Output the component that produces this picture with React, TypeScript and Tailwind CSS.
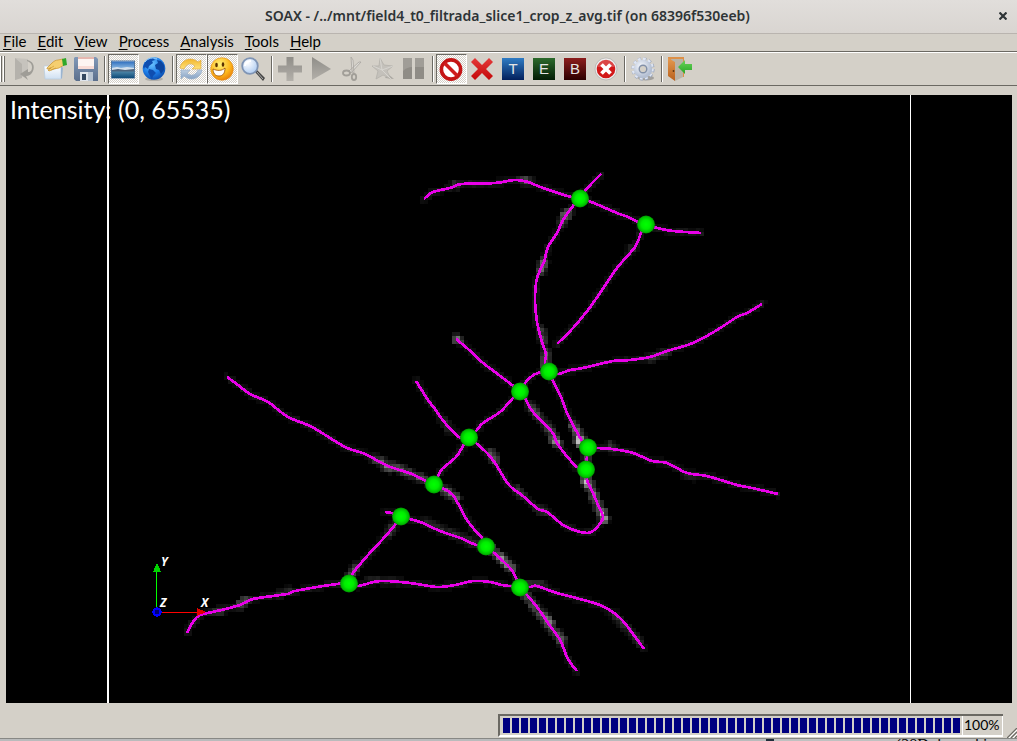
import React from "react";

type Point = [number, number];

/* ---------- scene data ---------- */

const filaments: string[] = [
  "424,199 433,192 450,188 462,184 495,183 515,180 528,182 543,188 571,197 580,198",
  "580,198 585,191 592,183 601,174",
  "580,198 589,201 617,213 628,217 638,222 646,224 657,228 673,231 701,233",
  "646,224 641,233 635,247 617,268 600,293 588,310 573,328 557,344",
  "580,198 573,206 563,220 557,233 548,247 544,262 537,278 535,300 537,322 542,342 546,354 545,363 549,371",
  "549,371 558,374 570,370 583,368 613,361 630,360 650,357 667,351 693,343 717,330 737,317 747,313 762,304",
  "456,339 468,349 483,363 495,372 512,385 520,391",
  "520,391 525,383 532,376 538,373 549,371",
  "416,381 428,400 435,409 445,423 459,437 469,437",
  "520,391 513,398 500,412 483,423 476,431 469,437",
  "469,437 463,446 456,457 442,469 438,476 434,484",
  "520,391 526,400 533,412 552,432 557,443 565,454 577,467 586,469",
  "549,371 553,381 561,397 567,413 573,425 581,439 588,447 587,457 586,469 587,480 593,493 598,505 603,517 599,525 593,531 587,533 577,531 563,525 547,512 538,509 523,496 509,485 495,463 487,453 476,443 469,437",
  "588,447 597,448 612,449 633,453 652,461 667,463 687,473 707,476 737,485 752,488 778,494",
  "227,377 238,385 250,394 268,402 288,417 312,427 345,447 365,454 388,466 412,474 426,481 434,484",
  "434,484 442,488 453,495 465,517 473,528 482,538 486,546 493,552 510,568 516,578 520,587 527,595 537,607 548,623 560,640 567,657 572,665 577,671",
  "385,512 392,513 401,516 410,519 423,523 440,531 463,539 476,545 486,546",
  "401,516 395,525 382,540 368,555 353,573 349,583",
  "187,633 193,622 200,615 217,611 240,605 253,599 287,594 295,591 330,585 349,583 358,586 380,581 410,583 437,587 455,585 473,581 490,582 502,585 520,587 530,587 537,586 557,593 600,605 620,618 633,634 644,649",
];

const junctions: Point[] = [
  [580, 198], [646, 224], [549, 371], [520, 391], [469, 437], [588, 447],
  [586, 469], [434, 484], [401, 516], [486, 546], [349, 583], [520, 587],
];

/* Bright stretches of the underlying image: path and peak grey level. */
const bright: [string, number][] = [
  ["455,184 458,185", 70], ["522,180 530,181", 85], ["564,216 568,212", 105],
  ["562,222 568,214", 90], ["541,270 544,262", 105], ["541,330 543,340", 75],
  ["546,353 545,365", 95], ["456,339 459,340", 110], ["650,358 668,352", 55],
  ["631,249 634,248", 50], ["531,407 553,434", 80], ["553,438 557,443", 155],
  ["573,425 582,440", 115], ["579,440 580,442", 235], ["587,455 587,462", 75],
  ["586,478 603,517", 120], ["586,481 589,485", 185], ["602,512 604,519", 175],
  ["375,459 425,480", 85], ["385,465 390,468", 125], ["445,490 456,498", 110],
  ["490,452 495,460", 105], ["516,489 523,496", 60], ["536,508 545,512", 60],
  ["491,549 512,568", 110], ["500,557 507,565", 150], ["525,594 562,642", 95],
  ["543,615 550,624", 145], ["557,634 561,639", 135], ["388,533 393,527", 75],
  ["351,574 356,567", 75], ["212,612 222,611", 55], ["240,605 246,600", 100],
  ["280,594 290,591", 50], ["520,585 542,584", 60], ["615,615 640,643", 50],
  ["425,522 478,545", 50], ["610,446 614,449", 70], ["685,474 697,477", 40],
  ["370,580 400,582", 40], ["443,420 450,430", 45],
];

const CELL = 4;

function parse(path: string): Point[] {
  return path.split(" ").map((p) => p.split(",").map(Number) as Point);
}

/* Catmull-Rom spline through the traced points. */
function smooth(path: string): string {
  const p = parse(path);
  let d = `M${p[0][0]} ${p[0][1]}`;
  for (let i = 0; i < p.length - 1; i++) {
    const a = p[Math.max(0, i - 1)];
    const b = p[i];
    const c = p[i + 1];
    const e = p[Math.min(p.length - 1, i + 2)];
    d += `C${b[0] + (c[0] - a[0]) / 6} ${b[1] + (c[1] - a[1]) / 6} ${c[0] - (e[0] - b[0]) / 6} ${c[1] - (e[1] - b[1]) / 6} ${c[0]} ${c[1]}`;
  }
  return d;
}

function noise(a: number, b: number): number {
  const n = Math.sin(a * 12.9898 + b * 78.233) * 43758.5453;
  return n - Math.floor(n);
}

function buildHaze(): { x: number; y: number; v: number }[] {
  const cells = new Map<string, { x: number; y: number; v: number }>();
  const add = (path: string, level: number, radius: number) => {
    const pts = parse(path);
    for (let i = 1; i < pts.length; i++) {
      const [x0, y0] = pts[i - 1];
      const [x1, y1] = pts[i];
      const steps = Math.max(1, Math.ceil(Math.hypot(x1 - x0, y1 - y0) / 2));
      for (let s = 0; s <= steps; s++) {
        const px = x0 + ((x1 - x0) * s) / steps;
        const py = y0 + ((y1 - y0) * s) / steps;
        for (let dx = -1; dx <= 1; dx++) {
          for (let dy = -1; dy <= 1; dy++) {
            const cx = Math.floor(px / CELL) + dx;
            const cy = Math.floor(py / CELL) + dy;
            const d = Math.hypot((cx + 0.5) * CELL - px, (cy + 0.5) * CELL - py);
            const fall = Math.max(0, 1 - d / radius);
            const v = Math.round(level * fall * (0.6 + 0.7 * noise(cx, cy)));
            const key = cx + ":" + cy;
            const old = cells.get(key);
            if (v > 7 && (!old || old.v < v)) {
              cells.set(key, { x: cx * CELL, y: cy * CELL, v: Math.min(v, 235) });
            }
          }
        }
      }
    }
  };
  filaments.forEach((f) => add(f, 28, 6));
  bright.forEach(([p, level]) => add(p, level, 7));
  return [...cells.values()];
}

const haze = buildHaze();

function Scene() {
  return (
    <svg viewBox="6 95 1006 608" className="block w-full" role="img" aria-label="Filament network">
      <defs>
        <radialGradient id="ball">
          <stop offset="0" stopColor="#00ff00" />
          <stop offset="0.5" stopColor="#00ee00" />
          <stop offset="0.85" stopColor="#00bc00" />
          <stop offset="1" stopColor="#008a00" />
        </radialGradient>
      </defs>
      <rect x="6" y="95" width="1006" height="608" fill="#000" />
      <g shapeRendering="crispEdges">
        {haze.map((c) => (
          <rect key={c.x + "-" + c.y} x={c.x} y={c.y} width={CELL} height={CELL} fill={`rgb(${c.v},${c.v},${c.v})`} />
        ))}
        <rect x="107" y="95" width="2" height="608" fill="#fff" />
        <rect x="910" y="95" width="1" height="608" fill="#fff" />
        {filaments.map((f) => (
          <path key={f} d={smooth(f)} fill="none" stroke="#e800e8" strokeWidth="2.7" strokeLinejoin="round" />
        ))}
      </g>
      {junctions.map(([x, y]) => (
        <circle key={x + "," + y} cx={x} cy={y + 0.5} r="9" fill="url(#ball)" />
      ))}
      <g shapeRendering="crispEdges">
        <rect x="156" y="570" width="1" height="38" fill="#00ff00" />
        <path d="M157 562.5l4 9.5h-8z" fill="#00d400" />
        <rect x="161" y="612" width="38" height="1" fill="#ff0000" />
        <path d="M206 612l-9-4v8z" fill="#e00000" />
        <circle cx="157" cy="612" r="3.5" fill="#00006e" stroke="#0000ff" strokeWidth="2.5" />
      </g>
      <g fill="#fff" fontFamily="'Noto Sans', sans-serif" fontSize="12" fontWeight="700" fontStyle="italic">
        <text x="161" y="566">Y</text>
        <text x="160" y="607">Z</text>
        <text x="201" y="607">X</text>
      </g>
    </svg>
  );
}

/* ---------- toolbar icons ---------- */

function Icon({ children }: { children: React.ReactNode }) {
  return (
    <svg viewBox="0 0 24 24" className="size-6" aria-hidden="true">
      {children}
    </svg>
  );
}

function IconDefs() {
  const g = (id: string, a: string, b: string) => (
    <linearGradient id={id} x1="0" y1="0" x2="0" y2="1">
      <stop offset="0" stopColor={a} />
      <stop offset="1" stopColor={b} />
    </linearGradient>
  );
  return (
    <svg className="absolute size-0" aria-hidden="true">
      <defs>
        {g("gBlue", "#2f7cc4", "#03205c")}
        {g("gGreen", "#2c6a2c", "#031c05")}
        {g("gRed", "#8c1d1d", "#2c0000")}
        {g("gSky", "#2f6fbe", "#a9d0ee")}
        {g("gSea", "#4d86a8", "#0d4a78")}
        {g("gYellow", "#f2b62c", "#ffe27a")}
        {g("gSteel", "#bccde0", "#86a3c4")}
        {g("gCross", "#e43a3a", "#c40808")}
        {g("gGrey", "#8f8d88", "#b3b0aa")}
        {g("gArrow", "#6bd35a", "#27a727")}
        {g("gDoor", "#e59a50", "#b8601c")}
        {g("gFloppy", "#8199b8", "#5b6f8c")}
        {g("gPaper", "#ffffff", "#cfe0f2")}
        <radialGradient id="gGlobe" cx="0.4" cy="0.3" r="0.75">
          <stop offset="0" stopColor="#6cc4ff" />
          <stop offset="0.55" stopColor="#1f80ea" />
          <stop offset="1" stopColor="#0a48a8" />
        </radialGradient>
        <radialGradient id="gSmile" cx="0.4" cy="0.3" r="0.75">
          <stop offset="0" stopColor="#fff27a" />
          <stop offset="0.6" stopColor="#fdb91e" />
          <stop offset="1" stopColor="#e87a08" />
        </radialGradient>
        <radialGradient id="gLens" cx="0.35" cy="0.3" r="0.8">
          <stop offset="0" stopColor="#ffffff" />
          <stop offset="1" stopColor="#a9c8f0" />
        </radialGradient>
        <radialGradient id="gGear" cx="0.35" cy="0.3" r="0.8">
          <stop offset="0" stopColor="#f6f9ff" />
          <stop offset="1" stopColor="#b4bfd2" />
        </radialGradient>
      </defs>
    </svg>
  );
}

const icons: Record<string, React.ReactNode> = {
  Revert: (
    <Icon>
      <path d="M3 1l13 1v17l-6 1-7 3z" fill="#c6c3bd" />
      <path d="M3 1l7 6v14l-7 2z" fill="#b5b2ac" />
      <path d="M15 3c6 1 8 6 6 11-1 3-4 5-7 5l2 4-8-6 8-5v3c3 0 4-2 4-5s-2-5-5-6z" fill="#9f9d97" />
    </Icon>
  ),
  Open: (
    <Icon>
      <path d="M1 9h17v13H2z" fill="url(#gPaper)" stroke="#b8cce0" strokeWidth="0.7" />
      <path d="M18 9l2 2-1 10-1 1z" fill="#9ab4d0" />
      <path d="M4 11l5-5c2-2 4-3 6-3l5-1 1 6-5 3-5 1-5 2-1-1 3-2-4 1z" fill="#f5cf70" stroke="#c9922c" strokeWidth="0.7" />
      <path d="M6 12l5-3M8 13l5-2" stroke="#c9922c" strokeWidth="0.6" />
      <path d="M19 2l4-1 1 7-4 1z" fill="#2fa82a" />
    </Icon>
  ),
  Save: (
    <Icon>
      <path d="M1 0h21l2 2v22H2l-2-2V1z" fill="url(#gFloppy)" />
      <path d="M4 0h16v12H4z" fill="#fdf5f2" />
      <path d="M4 0h16v2H4z" fill="#e6b8b0" />
      <path d="M4 9h16v3H4z" fill="#f8dcd6" />
      <path d="M6 15h13v9H6z" fill="#dfe5ec" />
      <path d="M8 17h4v6H8z" fill="#33475f" />
      <path d="M14 15h5v9h-5z" fill="#b8c4d2" />
    </Icon>
  ),
  "Slice planes": (
    <Icon>
      <rect x="0.5" y="4" width="23" height="17" fill="#e6eef6" stroke="#54779c" />
      <rect x="1" y="4.500" width="22" height="9" fill="url(#gSky)" />
      <path d="M1 11l5-1 4 1 6-1 7 1v3H1z" fill="#d4e0ec" />
      <path d="M1 13l6-1 7 1 9-1v3H1z" fill="#4a627c" />
      <rect x="1" y="14.500" width="22" height="6.500" fill="url(#gSea)" />
    </Icon>
  ),
  Volume: (
    <Icon>
      <ellipse cx="12" cy="22" rx="9" ry="2" fill="#77777766" />
      <circle cx="12" cy="11.500" r="11.300" fill="url(#gGlobe)" />
      <path d="M3 5c2-3 5-4 8-4l2 2-3 1 1 2-4 3-1 3-3-2-1 2-1-2z" fill="#0f4eb0" />
      <path d="M7 12l4 1 3 3-3 3-1 4-2-4-2-4z" fill="#0f4eb0" />
      <path d="M15 3l4 1 3 4v5l-3 4-2-4-3-1-1-4 3-2z" fill="#0c459f" />
      <path d="M3 5c3-4 8-5 12-3" stroke="#9cd6ff" strokeWidth="1" fill="none" />
    </Icon>
  ),
  Update: (
    <Icon>
      <path d="M1 11C2 4 9 0 16 3l3 2 3-2v9h-9l3-3c-4-4-9-2-11 3z" fill="url(#gYellow)" stroke="#dba53a" strokeWidth="0.6" />
      <path d="M23 13c-1 7-8 11-15 8l-3-2-3 3v-9h9l-3 3c4 4 9 2 11-3z" fill="url(#gSteel)" stroke="#93abc6" strokeWidth="0.6" />
    </Icon>
  ),
  Smile: (
    <Icon>
      <circle cx="12" cy="12" r="11.300" fill="url(#gSmile)" stroke="#e28a10" strokeWidth="0.6" />
      <ellipse cx="6.500" cy="8" rx="1.300" ry="2.300" fill="#5a3000" />
      <ellipse cx="13" cy="7.500" rx="1.300" ry="2.300" fill="#5a3000" />
      <path d="M3 12c4 2 9 2 12-1 0 5-2 8-6 8s-6-3-6-7z" fill="#fff" stroke="#9a4a00" strokeWidth="0.8" />
    </Icon>
  ),
  Zoom: (
    <Icon>
      <path d="M14 15l2-2 8 8-2 3z" fill="#444" />
      <path d="M16 15l6 7" stroke="#aaa" strokeWidth="1" />
      <circle cx="9" cy="9" r="7.800" fill="url(#gLens)" stroke="#7f94b4" strokeWidth="1.800" />
      <path d="M4 9c0-3 3-5 6-5" stroke="#fff" strokeWidth="2" fill="none" />
    </Icon>
  ),
  Add: (
    <Icon>
      <path d="M8.500 0h7v8.500H24v7h-8.500V24h-7v-8.500H0v-7h8.500z" fill="url(#gGrey)" />
    </Icon>
  ),
  Play: (
    <Icon>
      <path d="M3 0l19 12L3 23z" fill="url(#gGrey)" />
    </Icon>
  ),
  Cut: (
    <Icon>
      <path d="M11 0l2 3 1 13-2-1zM21 5l-2 0-10 9 2 2z" fill="#dddbd6" stroke="#a8a59f" strokeWidth="0.8" />
      <ellipse cx="6.500" cy="16" rx="3.500" ry="2.500" fill="none" stroke="#a19e98" strokeWidth="1.800" />
      <ellipse cx="14" cy="20" rx="2.200" ry="3" fill="none" stroke="#a19e98" strokeWidth="1.800" />
    </Icon>
  ),
  Star: (
    <Icon>
      <path d="M14 21l9 1-6-5z" fill="#aaa7a1" />
      <path d="M9 1l4 7 9 1-6 5 4 8-8-4-7 4 2-8-6-5h7z" fill="#c4c1bb" stroke="#b4b1ab" strokeWidth="0.8" />
      <path d="M9 1l2 12-9-4M11 13l9 9M11 13l11-4" stroke="#dedcd8" strokeWidth="0.7" fill="none" />
    </Icon>
  ),
  Pause: (
    <Icon>
      <path d="M1 1h9v21H1zM13 1h9v21h-9z" fill="#a09d97" />
      <path d="M1 14c3-3 6-4 9-4v12H1zM13 10h9v12h-9z" fill="#8f8c86" />
    </Icon>
  ),
  None: (
    <Icon>
      <circle cx="12" cy="12.500" r="9.600" fill="#fff" stroke="#c41414" strokeWidth="3.600" />
      <path d="M5.500 6l13 13" stroke="#cf1c1c" strokeWidth="3.600" />
    </Icon>
  ),
  Delete: (
    <Icon>
      <path d="M5 1l7 7 7-7 4 4-7 7 7 7-4 4-7-7-7 7-4-4 7-7-7-7z" fill="url(#gCross)" />
    </Icon>
  ),
  "Delete all": (
    <Icon>
      <circle cx="12" cy="12" r="10" fill="#d21818" stroke="#ececec" strokeWidth="1.400" />
      <circle cx="12" cy="12" r="11" fill="none" stroke="#a8a8a8" strokeWidth="0.600" />
      <path d="M7.500 7.500l9 9M16.500 7.500l-9 9" stroke="#fff" strokeWidth="3.800" />
      <path d="M3 10a9 9 0 0 1 18 0z" fill="#ffffff33" />
    </Icon>
  ),
  Settings: (
    <Icon>
      <ellipse cx="15" cy="21" rx="8" ry="2.500" fill="#77777788" />
      <circle cx="12" cy="12" r="9.800" fill="none" stroke="#9aa5bb" strokeWidth="3.600" strokeDasharray="3 2.131" />
      <circle cx="11.700" cy="11.700" r="9.500" fill="none" stroke="#dfe6f4" strokeWidth="3.200" strokeDasharray="2.700 2.274" />
      <circle cx="12" cy="12" r="6.500" fill="none" stroke="url(#gGear)" strokeWidth="5.500" />
      <circle cx="12" cy="12" r="3.800" fill="#d4d0c8" stroke="#8290a8" strokeWidth="1.400" />
    </Icon>
  ),
  Exit: (
    <Icon>
      <path d="M0 0h16v20H9L0 19z" fill="#dd9048" />
      <path d="M3 2h12v18l-8 4z" fill="#b9b3a8" />
      <path d="M0 1l7 4v19l-7-5z" fill="url(#gDoor)" />
      <circle cx="5.500" cy="14" r="0.900" fill="#5a3410" />
      <path d="M10 10l7-7v4h8v6h-8v4z" fill="url(#gArrow)" />
    </Icon>
  ),
};

function Letter({ char, fill }: { char: string; fill: string }) {
  return (
    <svg viewBox="0 0 24 24" className="size-6" aria-hidden="true">
      <rect x="1" y="1" width="22" height="22" fill={fill} />
      <text x="12" y="17" textAnchor="middle" fontSize="15" fontFamily="'Liberation Sans', sans-serif" fill="#e4e4e4">
        {char}
      </text>
    </svg>
  );
}

type Tool = { name: string; pressed?: boolean; disabled?: boolean; letter?: string; fill?: string };

const groups: Tool[][] = [
  [{ name: "Revert", disabled: true }, { name: "Open" }, { name: "Save" }],
  [{ name: "Slice planes", pressed: true }, { name: "Volume" }],
  [{ name: "Update", pressed: true }, { name: "Smile", pressed: true }, { name: "Zoom" }],
  [
    { name: "Add", disabled: true }, { name: "Play", disabled: true }, { name: "Cut", disabled: true },
    { name: "Star", disabled: true }, { name: "Pause", disabled: true },
  ],
  [
    { name: "None", pressed: true }, { name: "Delete" },
    { name: "Tips", letter: "T", fill: "url(#gBlue)" },
    { name: "Edges", letter: "E", fill: "url(#gGreen)" },
    { name: "Bodies", letter: "B", fill: "url(#gRed)" },
    { name: "Delete all" },
  ],
  [{ name: "Settings" }],
  [{ name: "Exit" }],
];

function ToolButton({ tool }: { tool: Tool }) {
  const face = tool.pressed
    ? "border-t-[#6b6963] border-l-[#6b6963] border-b-white border-r-white bg-[conic-gradient(#fff_25%,#d4d0c8_0_50%,#fff_0_75%,#d4d0c8_0)] bg-[length:2px_2px]"
    : "border-transparent";
  return (
    <button
      type="button"
      aria-label={tool.name}
      aria-pressed={tool.pressed}
      disabled={tool.disabled}
      className={`flex h-[30px] w-[31px] shrink-0 items-center justify-center border pr-px ${face}`}
    >
      {tool.letter ? <Letter char={tool.letter} fill={tool.fill ?? "#000"} /> : icons[tool.name]}
    </button>
  );
}

const menus = ["File", "Edit", "View", "Process", "Analysis", "Tools", "Help"];

export default function App() {
  return (
    <div className="flex min-h-screen flex-col bg-[#d4d0c8] font-['Lato',sans-serif] text-black">
      <IconDefs />
      <header className="grid h-[34px] grid-cols-[24px_1fr_24px] items-center border-b border-[#b9b4af] bg-linear-to-b from-[#e1dedb] to-[#d9d5d1] pr-0.5 pb-0.5">
        <h1 className="col-start-2 truncate text-center font-['Noto_Sans',sans-serif] text-sm leading-5 font-semibold text-[#2e3436]">
          SOAX - /../mnt/field4_t0_filtrada_slice1_crop_z_avg.tif (on 68396f530eeb)
        </h1>
        <button type="button" aria-label="Close" className="flex size-6 items-center justify-center">
          <svg viewBox="0 0 8 8" className="size-2" aria-hidden="true">
            <path d="M0.500 0.500l7 7M7.500 0.500l-7 7" stroke="#2e3436" strokeWidth="2.200" />
          </svg>
        </button>
      </header>

      <nav className="flex h-[18px] items-start gap-[11px] border-b border-[#6b6963] px-[3px] text-[15px] leading-[15px]">
        {menus.map((m) => (
          <button key={m} type="button" className="whitespace-nowrap">
            <span className="underline underline-offset-2">{m[0]}</span>
            {m.slice(1)}
          </button>
        ))}
      </nav>

      <div role="toolbar" className="flex h-[34px] items-center border-t border-b border-t-white border-b-[#6b6963]">
        <div className="flex w-[9px] shrink-0 gap-px">
          <span className="h-[26px] w-0.5 border-r border-[#6b6963] bg-white" />
          <span className="h-[26px] w-0.5 border-r border-[#6b6963] bg-white" />
        </div>
        {groups.map((group, i) => (
          <React.Fragment key={i}>
            {i > 0 && (
              <div className="flex w-1.5 shrink-0 justify-center">
                <span className="h-[26px] w-0.5 border-l border-[#6b6963] bg-white" />
              </div>
            )}
            {group.map((t) => (
              <ToolButton key={t.name} tool={t} />
            ))}
          </React.Fragment>
        ))}
      </div>

      <main className="relative mt-[9px] mr-[5px] ml-1.5 bg-black">
        <Scene />
        <p className="absolute top-0 left-1 text-[25px] leading-7 text-white">Intensity: (0, 65535)</p>
      </main>

      <footer className="relative flex h-[35px] items-start justify-end pt-[11px] pr-[14px]">
        <div
          role="progressbar"
          aria-valuenow={100}
          aria-label="Progress"
          className="flex h-[23px] items-stretch border-t-2 border-b-2 border-l-2 border-t-[#6b6963] border-b-white border-l-[#6b6963]"
        >
          <div className="flex gap-0.5 py-0.5 pr-0.5 pl-[3px]">
            {Array.from({ length: 51 }, (_, i) => (
              <span key={i} className="w-[7px] bg-[#000080]" />
            ))}
          </div>
          <span className="w-[41px] border-x border-white pl-px text-sm leading-[18px]">100%</span>
        </div>
        <svg viewBox="0 0 10 10" className="absolute right-0 bottom-0 size-2.5" aria-hidden="true">
          <path d="M0 10L10 0M4 10l6-6M8 10l2-2" stroke="#6b6963" strokeWidth="1.200" />
          <path d="M2 10l8-8M6 10l4-4" stroke="#fff" strokeWidth="1" />
        </svg>
      </footer>

      <div className="flex h-[3px] justify-end overflow-hidden border-t border-[#888885] bg-[#b9bbbc]">
        <span className="w-2 bg-[#1f2d3a]" />
        <span className="w-[122px] bg-[#c0c1c1]" />
        <span className="w-[121px] overflow-hidden bg-[#c0c1c1] font-['Liberation_Serif',serif] text-base leading-3 whitespace-nowrap">
          (28D, la cual inser
        </span>
      </div>
    </div>
  );
}
